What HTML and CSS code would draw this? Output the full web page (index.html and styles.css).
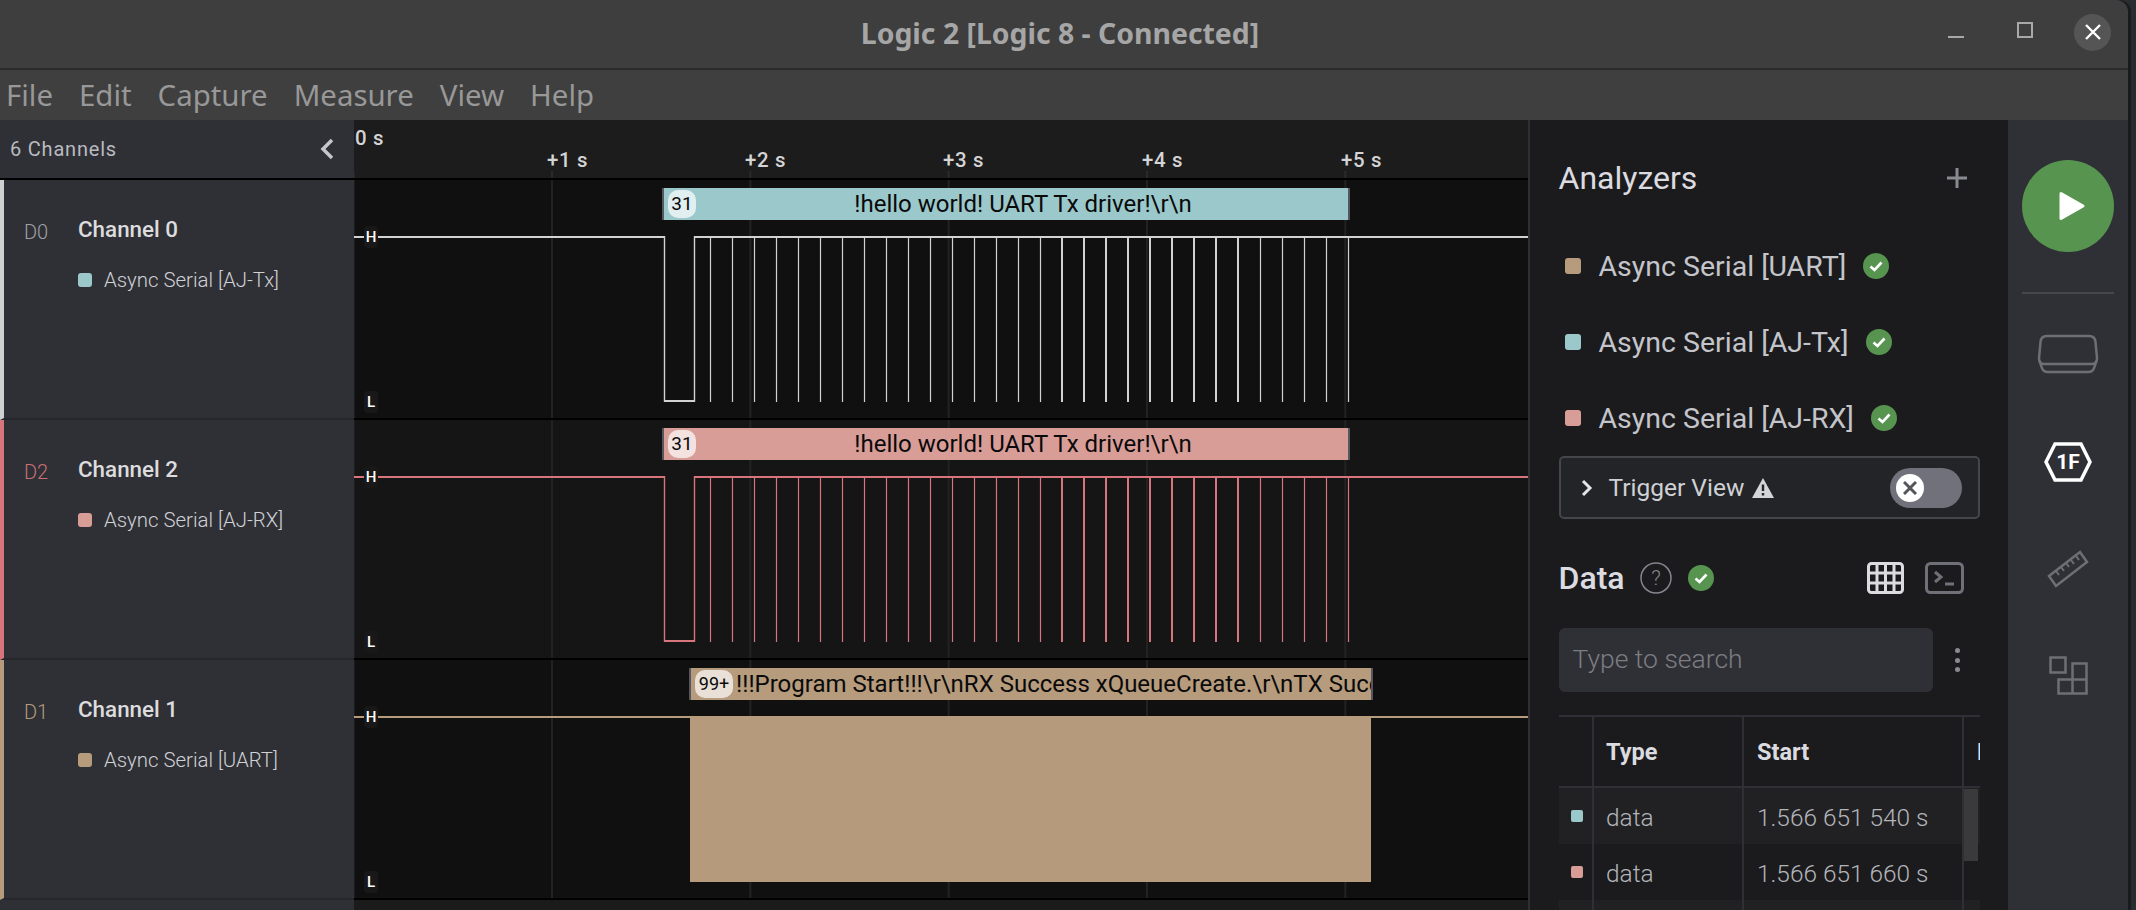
FILE: index.html
```html
<!DOCTYPE html>
<html lang="en">
<head>
  <meta charset="UTF-8">
  <title>Logic 2 [Logic 8 - Connected]</title>
  <link rel="stylesheet" href="styles.css">
</head>
<body>
  <div class="window">
    <header class="titlebar">
      <div class="title">Logic 2 [Logic 8 - Connected]</div>
      <div class="win-min"></div>
      <div class="win-max"></div>
      <div class="win-close">
        <svg width="16" height="16" viewBox="0 0 16 16"><path d="M1 1L15 15M15 1L1 15" stroke="#fff" stroke-width="2.4"/></svg>
      </div>
    </header>

    <nav class="menubar">
      <span>File</span>
      <span>Edit</span>
      <span>Capture</span>
      <span>Measure</span>
      <span>View</span>
      <span>Help</span>
    </nav>

    <div class="main">
      <aside class="channels">
        <div class="channels-head">
          <span>6 Channels</span>
          <svg class="collapse" width="16" height="22" viewBox="0 0 16 22"><path d="M13 2L4 11L13 20" fill="none" stroke="#c5c6ca" stroke-width="3.5"/></svg>
        </div>
        <div class="channel white">
          <div class="ch-title"><span class="ch-id">D0</span><span class="ch-name">Channel 0</span></div>
          <div class="ch-analyzer"><i class="swatch teal"></i>Async Serial [AJ-Tx]</div>
        </div>
        <div class="channel red">
          <div class="ch-title"><span class="ch-id">D2</span><span class="ch-name">Channel 2</span></div>
          <div class="ch-analyzer"><i class="swatch pink"></i>Async Serial [AJ-RX]</div>
        </div>
        <div class="channel tan">
          <div class="ch-title"><span class="ch-id">D1</span><span class="ch-name">Channel 1</span></div>
          <div class="ch-analyzer"><i class="swatch brown"></i>Async Serial [UART]</div>
        </div>
        <div class="channel"></div>
      </aside>

      <section class="timeline">
        <div class="ruler">
          <span class="zero">0 s</span>
          <span class="mark m1">+1 s</span>
          <span class="mark m2">+2 s</span>
          <span class="mark m3">+3 s</span>
          <span class="mark m4">+4 s</span>
          <span class="mark m5">+5 s</span>
        </div>

        <div class="lane">
          <div class="bubble bubble-a teal">
            <span class="count">31</span>
            <span class="bubble-text">!hello world! UART Tx driver!\r\n</span>
          </div>
          <svg class="wave" width="1174" height="240" viewBox="0 0 1174 240" stroke="#d2d2d2" fill="none">
            <path stroke-width="2" d="M0 57H311M341 57H1174M311 221H341"/>
            <path stroke-width="1.4" d="M310.5 56V222M340.5 56V222"/>
            <path stroke-width="1.2" d="M356.5 57V222M378.5 57V222M400.5 57V222M422.5 57V222M444.5 57V222M466.5 57V222M488.5 57V222M510.5 57V222M532.5 57V222M554.5 57V222M576.5 57V222M598.5 57V222M620.5 57V222M642.5 57V222M664.5 57V222M686.5 57V222M906.5 57V222M928.5 57V222M950.5 57V222M972.5 57V222M994.5 57V222"/>
            <path stroke-width="2" d="M708 57V222M730 57V222M752 57V222M774 57V222M796 57V222M818 57V222M840 57V222M862 57V222M884 57V222"/>
          </svg>
          <span class="level high">H</span>
          <span class="level low">L</span>
        </div>

        <div class="lane alt">
          <div class="bubble bubble-a pink">
            <span class="count">31</span>
            <span class="bubble-text">!hello world! UART Tx driver!\r\n</span>
          </div>
          <svg class="wave" width="1174" height="240" viewBox="0 0 1174 240" stroke="#d8757c" fill="none">
            <path stroke-width="2" d="M0 57H311M341 57H1174M311 221H341"/>
            <path stroke-width="1.4" d="M310.5 56V222M340.5 56V222"/>
            <path stroke-width="1.2" d="M356.5 57V222M378.5 57V222M400.5 57V222M422.5 57V222M444.5 57V222M466.5 57V222M488.5 57V222M510.5 57V222M532.5 57V222M554.5 57V222M576.5 57V222M598.5 57V222M620.5 57V222M642.5 57V222M664.5 57V222M686.5 57V222M906.5 57V222M928.5 57V222M950.5 57V222M972.5 57V222M994.5 57V222"/>
            <path stroke-width="2" d="M708 57V222M730 57V222M752 57V222M774 57V222M796 57V222M818 57V222M840 57V222M862 57V222M884 57V222"/>
          </svg>
          <span class="level high">H</span>
          <span class="level low">L</span>
        </div>

        <div class="lane">
          <div class="bubble bubble-b brown">
            <span class="count wide">99+</span>
            <span class="bubble-text left">!!!Program Start!!!\r\nRX Success xQueueCreate.\r\nTX Success xQueueCreate.</span>
          </div>
          <svg class="wave" width="1174" height="240" viewBox="0 0 1174 240" fill="none">
            <path stroke="#b69b7d" stroke-width="2" d="M0 57H1174"/>
            <rect x="336" y="58" width="681" height="164" fill="#b69a7c"/>
          </svg>
          <span class="level high">H</span>
          <span class="level low">L</span>
        </div>

        <div class="lane next"></div>
      </section>

      <section class="panel">
        <div class="panel-head">
          <h2>Analyzers</h2>
          <svg width="20" height="20" viewBox="0 0 20 20"><path d="M10 0V20M0 10H20" stroke="#8a8b92" stroke-width="3"/></svg>
        </div>

        <ul class="analyzers">
          <li><i class="swatch brown"></i>Async Serial [UART]<svg class="ok" viewBox="0 0 26 26"><circle cx="13" cy="13" r="13" fill="#579450"/><path d="M7.5 13.5L11.5 17L18.5 9.5" fill="none" stroke="#fff" stroke-width="2.6"/></svg></li>
          <li><i class="swatch teal"></i>Async Serial [AJ-Tx]<svg class="ok" viewBox="0 0 26 26"><circle cx="13" cy="13" r="13" fill="#579450"/><path d="M7.5 13.5L11.5 17L18.5 9.5" fill="none" stroke="#fff" stroke-width="2.6"/></svg></li>
          <li><i class="swatch pink"></i>Async Serial [AJ-RX]<svg class="ok" viewBox="0 0 26 26"><circle cx="13" cy="13" r="13" fill="#579450"/><path d="M7.5 13.5L11.5 17L18.5 9.5" fill="none" stroke="#fff" stroke-width="2.6"/></svg></li>
        </ul>

        <div class="trigger">
          <svg width="12" height="18" viewBox="0 0 12 18"><path d="M2 2L9 9L2 16" fill="none" stroke="#e4e4e8" stroke-width="3"/></svg>
          <span class="trigger-text">Trigger View</span>
          <svg width="22" height="20" viewBox="0 0 22 20"><path d="M11 0L22 20H0Z" fill="#d4d5d9"/><path d="M11 6.5V13M11 15V17.5" stroke="#232427" stroke-width="2.4"/></svg>
          <div class="toggle">
            <div class="knob">
              <svg width="14" height="14" viewBox="0 0 14 14"><path d="M1 1L13 13M13 1L1 13" stroke="#55565c" stroke-width="3"/></svg>
            </div>
          </div>
        </div>

        <div class="data-head">
          <h2>Data</h2>
          <svg class="help" width="32" height="32" viewBox="0 0 32 32"><circle cx="16" cy="16" r="15" fill="none" stroke="#85868d" stroke-width="1.5"/><text x="16" y="23" text-anchor="middle" class="help-q">?</text></svg>
          <svg class="ok" viewBox="0 0 26 26"><circle cx="13" cy="13" r="13" fill="#579450"/><path d="M7.5 13.5L11.5 17L18.5 9.5" fill="none" stroke="#fff" stroke-width="2.6"/></svg>
          <svg class="grid-icon" width="37" height="32" viewBox="0 0 37 32"><rect x="1.5" y="1.5" width="34" height="29" rx="3" fill="none" stroke="#dcdce0" stroke-width="3"/><path d="M10 2V30M18.5 2V30M27 2V30M2 11H35M2 21H35" stroke="#dcdce0" stroke-width="3"/></svg>
          <svg class="term-icon" width="39" height="32" viewBox="0 0 39 32"><rect x="1.5" y="1.5" width="36" height="29" rx="4" fill="none" stroke="#707178" stroke-width="3"/><path d="M10 10L16 15L10 20M20 22H29" fill="none" stroke="#707178" stroke-width="3"/></svg>
        </div>

        <div class="search-row">
          <div class="search">Type to search</div>
          <div class="kebab"><i></i><i></i><i></i></div>
        </div>

        <div class="table">
          <div class="tr th">
            <div class="cell c-mark"></div>
            <div class="cell c-type">Type</div>
            <div class="cell c-start">Start</div>
            <div class="cell c-dur">Duration</div>
          </div>
          <div class="tr odd">
            <div class="cell c-mark"><i class="dot teal"></i></div>
            <div class="cell c-type">data</div>
            <div class="cell c-start">1.566 651 540 s</div>
            <div class="cell c-dur"></div>
          </div>
          <div class="tr">
            <div class="cell c-mark"><i class="dot pink"></i></div>
            <div class="cell c-type">data</div>
            <div class="cell c-start">1.566 651 660 s</div>
            <div class="cell c-dur"></div>
          </div>
          <div class="tr odd">
            <div class="cell c-mark"></div>
            <div class="cell c-type"></div>
            <div class="cell c-start"></div>
            <div class="cell c-dur"></div>
          </div>
          <div class="scrollbar"></div>
        </div>
      </section>

      <aside class="rail">
        <button class="play">
          <svg width="28" height="30" viewBox="0 0 28 30"><path d="M3 2.5L25 15L3 27.5Z" fill="#fff" stroke="#fff" stroke-width="3" stroke-linejoin="round"/></svg>
        </button>
        <div class="rail-line"></div>
        <svg class="rail-icon device" width="62" height="40" viewBox="0 0 62 40" fill="none" stroke="#6e6f76" stroke-width="2.5"><path d="M10 2H52Q58 2 58.5 8L60 24Q60 30 55 30H7Q2 30 2 24L3.5 8Q4 2 10 2Z"/><path d="M2.5 27L5 34Q6 38 11 38H51Q56 38 57 34L59.5 27"/></svg>
        <div class="rail-icon hex">
          <svg width="48" height="40" viewBox="0 0 48 40"><path d="M11 2H37L46 20L37 38H11L2 20Z" fill="none" stroke="#fff" stroke-width="3.5"/></svg>
          <span>1F</span>
        </div>
        <svg class="rail-icon ruler-icon" width="42" height="38" viewBox="0 0 42 38" fill="none" stroke="#6e6f76" stroke-width="2.5"><path d="M2 26L33 2L40 12L9 36Z"/><path d="M9 21L12 25M14 17L17 21M19 13L22 17M24 10L27 14M29 6L32 10" stroke-width="2"/></svg>
        <svg class="rail-icon panels-icon" width="39" height="39" viewBox="0 0 39 39" fill="none" stroke="#6e6f76" stroke-width="2.5"><rect x="1.5" y="1.5" width="15" height="15"/><path d="M23.5 7.5H37.5V37.5H9.5V23.5H23.5ZM23.5 23.5H37.5M23.5 23.5V37.5"/></svg>
      </aside>
    </div>
  </div>
</body>
</html>
```

FILE: styles.css
```css
html, body {
  margin: 0;
  padding: 0;
  height: 100%;
  background: #2a2d30;
  overflow: hidden;
}
body {
  font-family: Roboto, sans-serif;
  color: #dcdce0;
}
h2 {
  margin: 0;
  font-weight: 400;
}
i {
  display: block;
}
.window {
  width: 2128px;
  height: 910px;
  display: flex;
  flex-direction: column;
  border-top-right-radius: 12px;
  overflow: hidden;
  box-shadow: 3px 0 0 #1a1b1d;
}

.teal { background: #9bc8cb; }
.pink { background: #d99d98; }
.brown { background: #b69b7d; }

.titlebar {
  height: 68px;
  flex: none;
  position: relative;
  display: flex;
  align-items: center;
  background: #3e3e3e;
  border-bottom: 2px solid #2b2b2b;
}
.title {
  position: absolute;
  left: 0;
  width: 2120px;
  margin-top: -3px;
  text-align: center;
  font-family: "Noto Sans", sans-serif;
  font-size: 28.4px;
  font-weight: 700;
  color: #a6a6a6;
}
.win-min {
  width: 16px;
  height: 2px;
  margin: 5px 0 0 1948px;
  background: #a8a8a8;
}
.win-max {
  width: 12px;
  height: 12px;
  margin: -8px 0 0 53px;
  border: 2px solid #a8a8a8;
}
.win-close {
  width: 37px;
  height: 37px;
  margin: -4px 0 0 41px;
  border-radius: 50%;
  background: #555;
  display: flex;
  align-items: center;
  justify-content: center;
}

.menubar {
  height: 50px;
  flex: none;
  box-sizing: border-box;
  display: flex;
  align-items: center;
  gap: 26px;
  padding-left: 6px;
  background: #3f3f3f;
  font-family: "Noto Sans", sans-serif;
  font-size: 29.4px;
  color: #989898;
}

.main {
  flex: 1;
  min-height: 0;
  display: flex;
}

.channels {
  width: 354px;
  flex: none;
  background: #2f3035;
}
.channels-head {
  height: 58px;
  border-bottom: 2px solid #000;
  display: flex;
  align-items: center;
  justify-content: space-between;
  padding: 0 19px 0 10px;
  font-size: 20px;
  letter-spacing: 0.8px;
  color: #b9bac0;
}
.channel {
  height: 238px;
  border-bottom: 2px solid #26272b;
  border-left: 4px solid transparent;
  padding-left: 20px;
}
.channel.white { border-left-color: #d0d0d0; }
.channel.red { border-left-color: #d8757c; }
.channel.tan { border-left-color: #b69b7d; }
.ch-title {
  display: flex;
  align-items: flex-start;
  padding-top: 36px;
}
.ch-id {
  width: 54px;
  padding-top: 4px;
  font-size: 20px;
  font-weight: 300;
  color: #a0a1a6;
}
.red .ch-id { color: #c96f76; }
.tan .ch-id { color: #b69b7d; }
.ch-name {
  font-size: 22.4px;
  font-weight: 500;
  color: #dcdcde;
}
.ch-analyzer {
  display: flex;
  align-items: center;
  gap: 12px;
  margin: 24px 0 0 54px;
  font-size: 20.4px;
  font-weight: 300;
  color: #d0d1d5;
}
.swatch {
  width: 14px;
  height: 14px;
  border-radius: 3px;
}

.timeline {
  width: 1174px;
  flex: none;
}
.ruler {
  height: 58px;
  border-bottom: 2px solid #000;
  position: relative;
  background: #1c1c1c linear-gradient(90deg, #2a2a2a 0 2px, transparent 2px) 197px bottom / 198.33px 7px repeat-x;
  font-size: 20.4px;
  font-weight: 500;
  letter-spacing: 0.7px;
  color: #d4d4d6;
}
.ruler span {
  position: absolute;
}
.zero { left: 1px; top: 6px; }
.mark { top: 28px; }
.m1 { left: 193px; }
.m2 { left: 391px; }
.m3 { left: 589px; }
.m4 { left: 788px; }
.m5 { left: 987px; }

.lane {
  height: 238px;
  border-bottom: 2px solid #000;
  position: relative;
  background: #101010 linear-gradient(90deg, #222 0 2px, transparent 2px) 197px 0 / 198.33px 100% repeat-x;
}
.lane.alt {
  background-color: #151515;
}
.lane.next {
  background: #1b1b1b;
}
.wave {
  position: absolute;
  left: 0;
  top: 0;
}
.level {
  position: absolute;
  left: 10px;
  width: 14px;
  height: 22px;
  line-height: 22px;
  text-align: center;
  border-radius: 4px;
  background: #181818;
  font-size: 15px;
  font-weight: 500;
  color: #fff;
}
.high { top: 46px; }
.low { top: 211px; }

.bubble {
  position: absolute;
  top: 8px;
  height: 32px;
  box-sizing: border-box;
  display: flex;
  align-items: center;
  border-left: 2px solid #555660;
  border-right: 2px solid #555660;
  color: #0a0a0a;
  overflow: hidden;
}
.bubble-a {
  left: 308px;
  width: 688px;
}
.bubble-b {
  left: 335px;
  width: 684px;
}
.count {
  flex: none;
  width: 28px;
  height: 28px;
  margin-left: 4px;
  border-radius: 10px;
  background: rgba(255, 255, 255, 0.7);
  text-align: center;
  line-height: 28px;
  font-size: 19px;
}
.count.wide {
  width: 38px;
  font-size: 18px;
}
.bubble-text {
  flex: 1;
  min-width: 0;
  padding-left: 2px;
  text-align: center;
  font-size: 24px;
  white-space: nowrap;
}
.bubble-text.left {
  text-align: left;
  padding-left: 3px;
  overflow: hidden;
}

.panel {
  width: 480px;
  flex: none;
  box-sizing: border-box;
  padding-left: 28.5px;
  background: #1b1b1d;
  border-left: 2px solid #2f3035;
}
.panel-head {
  height: 116px;
  display: flex;
  align-items: center;
  justify-content: space-between;
  padding-right: 41px;
}
.panel h2 {
  font-size: 32px;
}
.analyzers {
  list-style: none;
  margin: -8px 0 0;
  padding: 0;
}
.analyzers li {
  height: 76px;
  display: flex;
  align-items: center;
  padding-left: 6px;
  font-size: 28.5px;
  color: #c4c5cb;
}
.analyzers .swatch {
  width: 16px;
  height: 16px;
  margin-right: 18px;
}
.ok {
  width: 26px;
  height: 26px;
  flex: none;
  margin-left: 17px;
}

.trigger {
  width: 421px;
  height: 63px;
  box-sizing: border-box;
  display: flex;
  align-items: center;
  padding-left: 20px;
  background: #232427;
  border: 2px solid #45464c;
  border-radius: 5px;
}
.trigger-text {
  margin: 0 8px 0 16px;
  font-size: 24.5px;
  color: #d0d1d5;
}
.toggle {
  width: 72px;
  height: 40px;
  margin-left: auto;
  margin-right: 16px;
  border-radius: 20px;
  background: #70717a;
  display: flex;
  align-items: center;
  padding-left: 6px;
  box-sizing: border-box;
}
.knob {
  width: 28px;
  height: 28px;
  border-radius: 50%;
  background: #fff;
  display: flex;
  align-items: center;
  justify-content: center;
}

.data-head {
  display: flex;
  align-items: center;
  height: 32px;
  margin-top: 43px;
}
.data-head h2 {
  width: 81px;
  font-weight: 500;
}
.data-head .ok {
  margin-left: 16px;
}
.help-q {
  font-size: 21px;
  font-weight: 300;
  fill: #85868d;
}
.grid-icon {
  margin-left: 153px;
}
.term-icon {
  margin-left: 21px;
}

.search-row {
  display: flex;
  align-items: center;
  margin-top: 34px;
}
.search {
  width: 374px;
  height: 64px;
  box-sizing: border-box;
  padding-left: 14px;
  line-height: 62px;
  border-radius: 6px;
  background: #2f3035;
  font-size: 26.5px;
  font-weight: 300;
  color: #7c7d83;
}
.kebab {
  margin-left: 22px;
  display: flex;
  flex-direction: column;
  gap: 4.5px;
}
.kebab i {
  width: 5px;
  height: 5px;
  border-radius: 50%;
  background: #8a8b92;
}

.table {
  width: 421px;
  margin-top: 23px;
  border-top: 2px solid #2f3035;
  position: relative;
  overflow: hidden;
  height: 200px;
}
.tr {
  display: flex;
  height: 56px;
  align-items: stretch;
  font-size: 24.4px;
  font-weight: 300;
  color: #b4b5ba;
}
.tr.odd {
  background: #212124;
}
.tr.th {
  height: 71px;
  box-sizing: border-box;
  border-bottom: 2px solid #2f3035;
  font-size: 23.5px;
  font-weight: 700;
  color: #dcdce0;
}
.cell {
  box-sizing: border-box;
  display: flex;
  align-items: center;
  border-right: 2px solid #2f3035;
  white-space: nowrap;
  overflow: hidden;
}
.c-mark {
  width: 35.5px;
  padding-left: 12px;
}
.c-type {
  width: 150px;
  padding-left: 12px;
}
.c-start {
  width: 220px;
  padding-left: 13px;
}
.tr:not(.th) .c-type,
.tr:not(.th) .c-start {
  padding-top: 3px;
}
.c-dur {
  flex: 1;
  min-width: 0;
  padding-left: 13px;
  border-right: none;
}
.dot {
  width: 12px;
  height: 12px;
  border-radius: 2px;
}
.scrollbar {
  position: absolute;
  left: 405.5px;
  top: 72px;
  width: 14px;
  height: 72px;
  background: #3a3a3a;
}

.rail {
  width: 120px;
  flex: none;
  display: flex;
  flex-direction: column;
  align-items: center;
  background: #2f3035;
}
.play {
  width: 92px;
  height: 92px;
  margin-top: 40px;
  padding: 0 0 0 8px;
  border: none;
  border-radius: 50%;
  background: #579450;
  display: flex;
  align-items: center;
  justify-content: center;
}
.rail-line {
  width: 92px;
  height: 2px;
  margin-top: 40px;
  background: #45464c;
}
.rail-icon {
  flex: none;
}
.device {
  margin-top: 40px;
}
.hex {
  position: relative;
  width: 48px;
  height: 40px;
  margin-top: 68px;
}
.hex span {
  position: absolute;
  left: 0;
  top: 0;
  width: 48px;
  line-height: 40px;
  text-align: center;
  font-size: 21px;
  font-weight: 700;
  color: #fff;
}
.ruler-icon {
  margin-top: 68px;
}
.panels-icon {
  margin-top: 68px;
}
```
